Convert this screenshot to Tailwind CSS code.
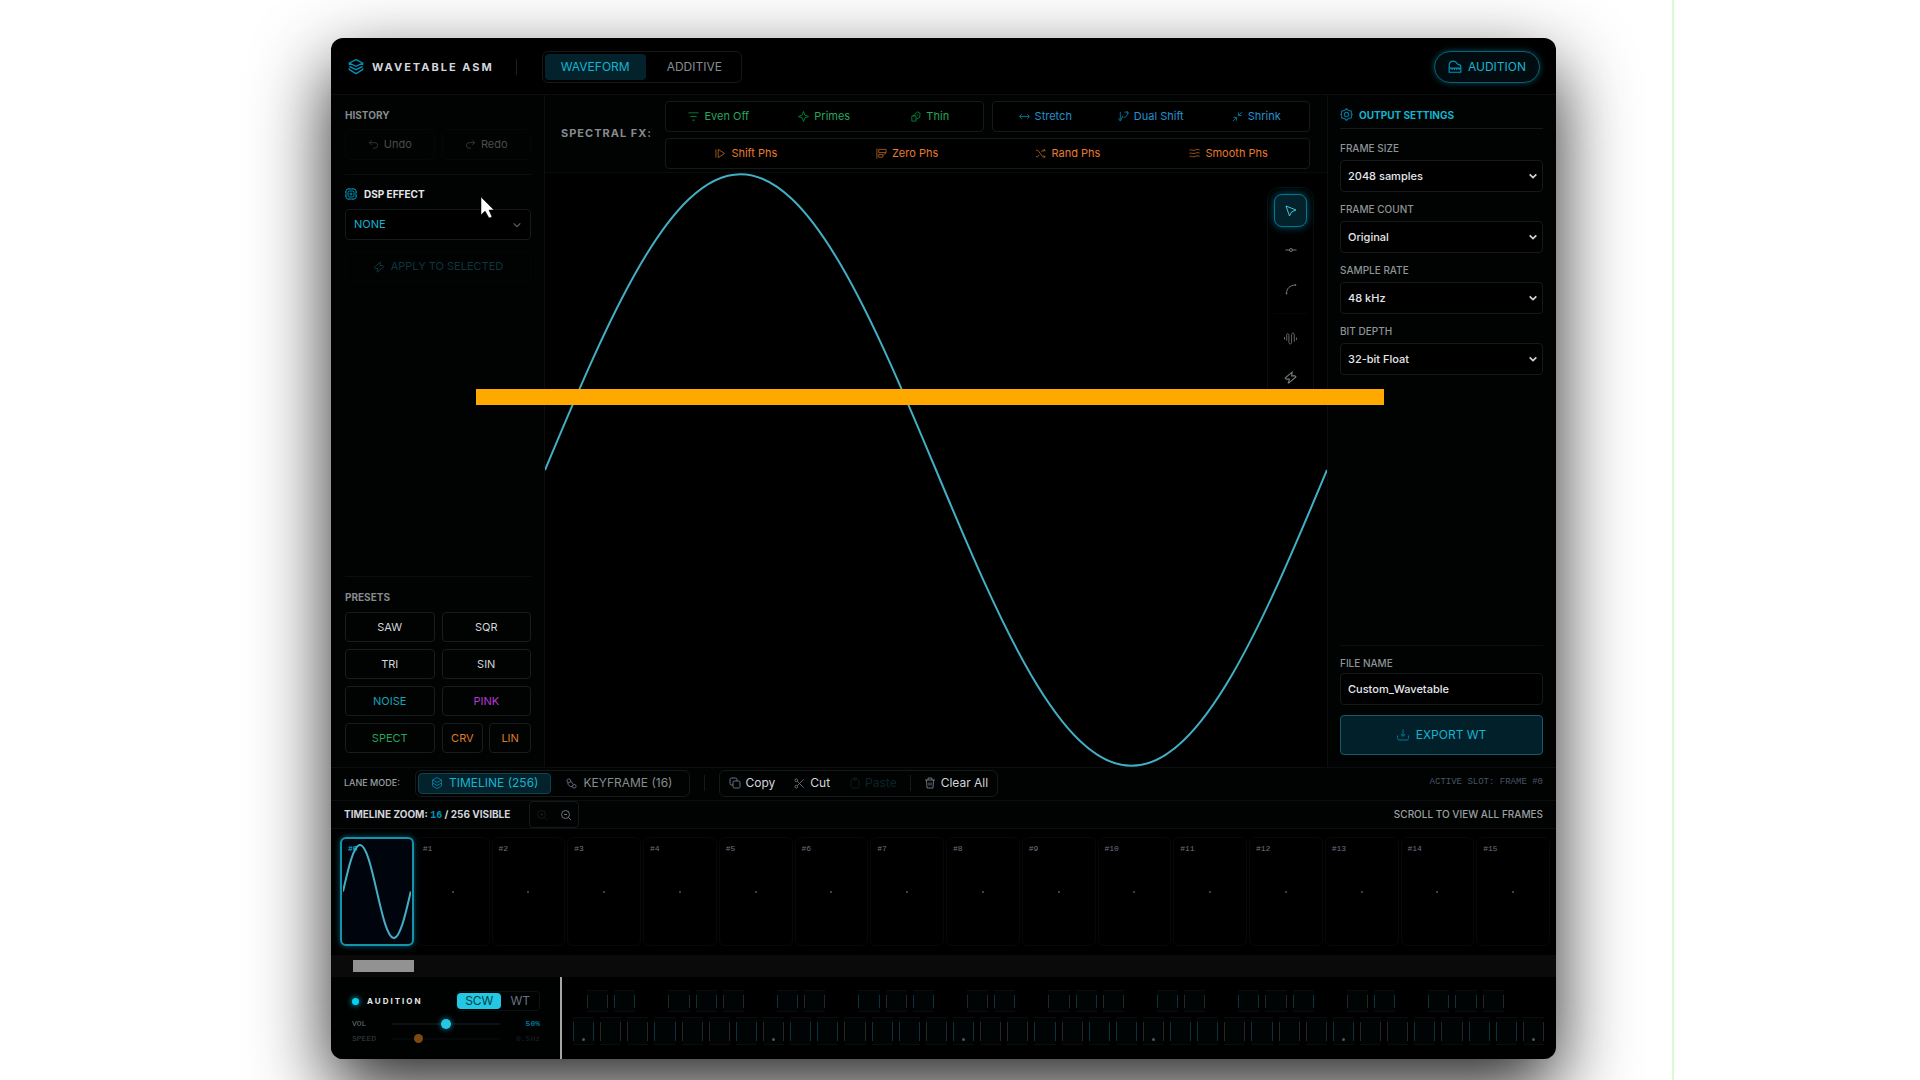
<!DOCTYPE html>
<html lang="en">

<head>
  <title>Wavetable ASM</title>
  <meta charset="UTF-8">
  <meta name="viewport" content="width=device-width, initial-scale=1.0">
  <script src="https://cdn.jsdelivr.net/npm/@tailwindcss/browser@4"></script>
</head>

<body class="bg-white font-['Inter',sans-serif] text-[11px] text-gray-300">

<!-- icon sprite -->
<svg class="hidden">
  <symbol id="i-layers" viewBox="0 0 24 24"><path d="M12 1 22 6 12 11 2 6ZM2 11l10 5 10-5M2 14v2l10 6 10-6v-2M2 7v2M22 7v2"/></symbol>
  <symbol id="i-piano" viewBox="0 0 24 24"><path d="M2 21h20V11c0-2-1-3-4-3-2 0-3-6-9-6-4 0-7 3-7 7ZM2 14h20M7 14v3M11 14v3M15 14v3M19 14v3"/></symbol>
  <symbol id="i-undo" viewBox="0 0 24 24"><path d="M8 3 3 8l5 5M3 8h12a6 6 0 0 1 0 12h-4"/></symbol>
  <symbol id="i-redo" viewBox="0 0 24 24"><path d="m16 3 5 5-5 5M21 8H9a6 6 0 0 0 0 12h4"/></symbol>
  <symbol id="i-chip" viewBox="0 0 24 24"><rect x="2" y="2" width="20" height="20" rx="4"/><rect x="6" y="6" width="12" height="12" rx="3"/><circle cx="12" cy="12" r="2"/><path d="M8 2V0M16 2V0M8 24v-2M16 24v-2M2 8H0M2 16H0M24 8h-2M24 16h-2"/></symbol>
  <symbol id="i-chevron" viewBox="0 0 24 24"><path d="m4 8 8 8 8-8"/></symbol>
  <symbol id="i-bolt" viewBox="0 0 24 24"><path d="M15 2 2 13l2 2h6l-2 7h1l13-11-2-2h-6Z"/></symbol>
  <symbol id="i-filter" viewBox="0 0 24 24"><path d="M1 4h22M5 12h14M9 20h6"/></symbol>
  <symbol id="i-primes" viewBox="0 0 24 24"><path d="m12 1 3 8 8 3-8 3-3 8-3-8-8-3 8-3Z"/></symbol>
  <symbol id="i-thin" viewBox="0 0 24 24"><path d="M4 11h9v11H4ZM10 11c0-5 3-8 7-9l5 3-1 9-8 4M15 7l2 3M7 8l1 3"/></symbol>
  <symbol id="i-stretch" viewBox="0 0 24 24"><path d="M2 12h20M6 7l-5 5 5 5M18 7l5 5-5 5"/></symbol>
  <symbol id="i-dual" viewBox="0 0 24 24"><path d="M5 2v19M1 16l4 6 6-12M14 3l3-2M12 14c6 0 9-4 9-12M16 4l5-3 2 5"/></symbol>
  <symbol id="i-shrink" viewBox="0 0 24 24"><path d="m22 2-8 8M14 3v7h7M2 22l8-8M3 14h7v7"/></symbol>
  <symbol id="i-shift" viewBox="0 0 24 24"><path d="M2 3v18M7 3v18l14-9Z"/></symbol>
  <symbol id="i-zero" viewBox="0 0 24 24"><path d="M2 1v22M6 3h16v7H6ZM6 14h9v6H6ZM16 15l6-4"/></symbol>
  <symbol id="i-shuffle" viewBox="0 0 24 24"><path d="M2 5h4l11 14h5M2 19h4l3-4M14 9l3-4h5M19 2l3 3-3 3M19 16l3 3-3 3"/></symbol>
  <symbol id="i-waves" viewBox="0 0 24 24"><path d="M1 5c4-3 6 1 10 0s7-3 12-1M1 12c4-3 6 1 10 0s7-3 12-1M1 19c4-3 6 1 10 0s7-3 12-1"/></symbol>
  <symbol id="i-pointer" viewBox="0 0 24 24"><path d="m2 2 7 20 4-8 9-4Z"/></symbol>
  <symbol id="i-node" viewBox="0 0 24 24"><circle cx="12" cy="12" r="3"/><path d="M1 12h8M15 12h8"/></symbol>
  <symbol id="i-curve" viewBox="0 0 24 24"><path d="M3 21C3 11 10 5 20 4"/><circle cx="3" cy="21" r="1"/><circle cx="21" cy="4" r="1"/></symbol>
  <symbol id="i-noise" viewBox="0 0 24 24"><path d="M1 14V9M5 16V6c0-4 4-4 4 0v13c0 4 5 4 5 0V5c0-4 5-4 5 0v13M23 15v-5"/></symbol>
  <symbol id="i-gear" viewBox="0 0 24 24"><path d="m12 1 3 3 6 2v5l2 1-2 1v5l-6 2-3 3-3-3-6-2v-5l-2-1 2-1V6l6-2Z"/><circle cx="12" cy="12" r="4"/></symbol>
  <symbol id="i-export" viewBox="0 0 24 24"><path d="M12 1v13M8 10l4 5 4-5M1 13v4c0 4 1 5 5 5h12c4 0 5-1 5-5v-4"/></symbol>
  <symbol id="i-stack" viewBox="0 0 24 24"><path d="M12 1 21 6 12 11 3 6ZM3 6v12l9 5 9-5V6M3 12l9 5 9-5"/></symbol>
  <symbol id="i-keyframe" viewBox="0 0 24 24"><circle cx="6" cy="6" r="4"/><circle cx="18" cy="18" r="4"/><path d="M4 10c0 6 4 9 10 9M10 6l6 8"/></symbol>
  <symbol id="i-copy" viewBox="0 0 24 24"><rect x="8" y="8" width="14" height="14" rx="3"/><path d="M8 16H5a3 3 0 0 1-3-3V5a3 3 0 0 1 3-3h8a3 3 0 0 1 3 3v3"/></symbol>
  <symbol id="i-cut" viewBox="0 0 24 24"><circle cx="5" cy="19" r="3"/><circle cx="5" cy="5" r="3"/><path d="m7 7 14 14M7 17 21 3"/></symbol>
  <symbol id="i-paste" viewBox="0 0 24 24"><rect x="4" y="4" width="16" height="18" rx="3"/><path d="M9 2h6v4H9Z"/></symbol>
  <symbol id="i-trash" viewBox="0 0 24 24"><path d="M2 6h20M8 6V2h8v4M5 6l1 16h12l1-16M10 11v6M14 11v6"/></symbol>
  <symbol id="i-zoom-in" viewBox="0 0 24 24"><circle cx="11" cy="11" r="8"/><path d="m17 17 5 5M8 11h6M11 8v6"/></symbol>
  <symbol id="i-zoom-out" viewBox="0 0 24 24"><circle cx="11" cy="11" r="8"/><path d="m17 17 5 5M8 11h6"/></symbol>
</svg>

<div class="relative flex h-screen flex-col overflow-hidden pt-[38px] pr-[364px] pb-[21px] pl-[331px] fill-none stroke-2">

  <div class="absolute inset-y-0 left-[1672px] w-[2px] bg-[#d9fad2]"></div>

  <div class="relative flex min-h-0 grow flex-col overflow-hidden rounded-xl bg-black shadow-[0_30px_76px_rgba(0,0,0,0.85)]">

    <header class="flex h-[57px] shrink-0 items-center border-b border-[#0b0e0e] pt-[2px] pr-4 pl-[17px]">
      <svg class="size-4 stroke-cyan-600"><use href="#i-layers"/></svg>
      <h1 class="ml-2 text-[11px] font-bold tracking-[2px] text-gray-300">WAVETABLE ASM</h1>
      <div class="ml-[22px] h-4 w-px bg-[#1c2020]"></div>
      <nav class="ml-[25px] flex h-8 gap-1 rounded-md border border-[#15191a] p-[2px] text-xs">
        <button class="rounded bg-[#04222b] px-4 text-[#14b4cf]">WAVEFORM</button>
        <button class="rounded px-[17px] text-[#868d90]">ADDITIVE</button>
      </nav>
      <button class="ml-auto flex h-8 items-center gap-[6px] rounded-full border border-[#0f5f70] bg-[#010c10] px-[13px] text-xs text-[#17b3cf] shadow-[0_0_6px_rgba(8,145,178,0.5)]">
        <svg class="size-[14px] stroke-cyan-600"><use href="#i-piano"/></svg>AUDITION
      </button>
    </header>

    <main class="flex min-h-0 grow">

      <aside class="flex w-[214px] shrink-0 flex-col border-r border-[#0b0e0e] bg-[#010202] pt-[14px] pr-[13px] pb-[14px] pl-[14px]">
        <h2 class="text-[10px] leading-3 font-bold text-[#858b8e]">HISTORY</h2>
        <div class="mt-[8px] grid grid-cols-2 gap-[7px] text-[#474d4f]">
          <button disabled class="flex h-[31px] items-center justify-center gap-[5px] rounded border border-[#050707]"><svg class="size-[11px] stroke-[#343a3c]"><use href="#i-undo"/></svg>Undo</button>
          <button disabled class="flex h-[31px] items-center justify-center gap-[5px] rounded border border-[#050707]"><svg class="size-[11px] stroke-[#343a3c]"><use href="#i-redo"/></svg>Redo</button>
        </div>
        <label for="dsp" class="mt-[14px] flex items-center gap-[7px] border-t border-[#0b0e0e] pt-[13px] text-[10px] leading-3 font-bold text-gray-200">
          <svg class="size-3 stroke-cyan-600"><use href="#i-chip"/></svg>DSP EFFECT
        </label>
        <div class="mt-[9px] grid items-center">
          <select id="dsp" class="col-start-1 row-start-1 h-[31px] appearance-none rounded border border-[#15191a] bg-black px-2 text-[11px] text-[#14b4cf]"><option>NONE</option></select>
          <svg class="col-start-1 row-start-1 mr-[9px] size-[10px] justify-self-end stroke-3 stroke-[#596064]"><use href="#i-chevron"/></svg>
        </div>
        <button disabled class="mt-[11px] flex h-[31px] items-center justify-center gap-[6px] rounded border border-[#040606] text-[#0c353f]"><svg class="size-3 stroke-[#0c353f]"><use href="#i-bolt"/></svg>APPLY TO SELECTED</button>

        <section class="mt-auto border-t border-[#0b0e0e] pt-[14px]">
          <h2 class="text-[10px] leading-3 font-bold text-[#858b8e]">PRESETS</h2>
          <div class="mt-[9px] grid grid-cols-2 gap-[7px]">
            <button class="h-[30px] rounded border border-[#181c1d]">SAW</button>
            <button class="h-[30px] rounded border border-[#181c1d]">SQR</button>
            <button class="h-[30px] rounded border border-[#181c1d]">TRI</button>
            <button class="h-[30px] rounded border border-[#181c1d]">SIN</button>
            <button class="h-[30px] rounded border border-[#181c1d] text-[#14a5b8]">NOISE</button>
            <button class="h-[30px] rounded border border-[#181c1d] text-[#b836cf]">PINK</button>
            <button class="h-[30px] rounded border border-[#181c1d] text-[#25a55c]">SPECT</button>
            <div class="grid grid-cols-2 gap-[6px] text-[#df7d2a]">
              <button class="h-[30px] rounded border border-[#181c1d]">CRV</button>
              <button class="h-[30px] rounded border border-[#181c1d]">LIN</button>
            </div>
          </div>
        </section>
      </aside>

      <section class="flex min-w-0 grow flex-col">
        <div class="flex h-[78px] shrink-0 items-center border-b border-[#080b0b] bg-[#010202] pr-[17px] pl-[16px]">
          <h2 class="w-[104px] shrink-0 text-[11px] font-bold tracking-[1px] text-[#858b8e]">SPECTRAL FX:</h2>
          <div class="grid grow grid-cols-2 gap-x-2 gap-y-[6px] pt-[2px]">
            <div class="grid h-[31px] grid-cols-3 rounded border border-[#15191a] bg-black text-[#25a55c]">
              <button class="flex items-center justify-center gap-[5px]"><svg class="size-[11px] stroke-green-700"><use href="#i-filter"/></svg>Even Off</button>
              <button class="flex items-center justify-center gap-[5px]"><svg class="size-[11px] stroke-green-700"><use href="#i-primes"/></svg>Primes</button>
              <button class="flex items-center justify-center gap-[5px]"><svg class="size-[11px] stroke-green-700"><use href="#i-thin"/></svg>Thin</button>
            </div>
            <div class="grid h-[31px] grid-cols-3 rounded border border-[#15191a] bg-black text-[#2391cd]">
              <button class="flex items-center justify-center gap-[5px]"><svg class="size-[11px] stroke-cyan-700"><use href="#i-stretch"/></svg>Stretch</button>
              <button class="flex items-center justify-center gap-[5px]"><svg class="size-[11px] stroke-cyan-700"><use href="#i-dual"/></svg>Dual Shift</button>
              <button class="flex items-center justify-center gap-[5px]"><svg class="size-[11px] stroke-cyan-700"><use href="#i-shrink"/></svg>Shrink</button>
            </div>
            <div class="col-span-2 grid h-[31px] grid-cols-4 rounded border border-[#15191a] bg-black text-[#e87a2e]">
              <button class="flex items-center justify-center gap-[5px]"><svg class="size-[11px] stroke-[#a35a1c]"><use href="#i-shift"/></svg>Shift Phs</button>
              <button class="flex items-center justify-center gap-[5px]"><svg class="size-[11px] stroke-[#a35a1c]"><use href="#i-zero"/></svg>Zero Phs</button>
              <button class="flex items-center justify-center gap-[5px]"><svg class="size-[11px] stroke-[#a35a1c]"><use href="#i-shuffle"/></svg>Rand Phs</button>
              <button class="flex items-center justify-center gap-[5px]"><svg class="size-[11px] stroke-[#a35a1c]"><use href="#i-waves"/></svg>Smooth Phs</button>
            </div>
          </div>
        </div>
        <div class="relative min-h-0 grow bg-black">
          <svg class="absolute inset-0 size-full stroke-[#42afc4]" viewBox="0 0 1000 200" preserveAspectRatio="none">
            <path vector-effect="non-scaling-stroke" d="M0 100C81.5 48.8 159.5 0.4 250 0.4C340.5 0.4 418.5 48.8 500 100C581.5 151.2 659.5 199.6 750 199.6C840.5 199.6 918.5 151.2 1000 100"/>
          </svg>
          <div class="absolute top-[14px] right-[13px] flex flex-col gap-[6px] rounded-xl border border-[#0b0e0e] p-[6px]">
            <button aria-label="Select" class="grid size-[33px] place-items-center rounded-lg border border-cyan-700 bg-[#04222b] shadow-[0_0_8px_rgba(8,145,178,0.6)]"><svg class="size-3 stroke-[#3fc4d8]"><use href="#i-pointer"/></svg></button>
            <button aria-label="Line" class="grid size-[33px] place-items-center"><svg class="size-3 stroke-[#767c7f]"><use href="#i-node"/></svg></button>
            <button aria-label="Curve" class="grid size-[33px] place-items-center"><svg class="size-3 stroke-[#767c7f]"><use href="#i-curve"/></svg></button>
            <div class="my-[2px] h-px bg-[#050707]"></div>
            <button aria-label="Noise" class="grid size-[33px] place-items-center"><svg class="size-[13px] stroke-[1.5] stroke-[#767c7f]"><use href="#i-noise"/></svg></button>
            <button aria-label="Bolt" class="grid size-[33px] place-items-center"><svg class="size-[13px] stroke-[#767c7f]"><use href="#i-bolt"/></svg></button>
          </div>
        </div>
      </section>

      <aside class="flex w-[229px] shrink-0 flex-col border-l border-[#0b0e0e] bg-[#010202] pt-[13px] pr-[13px] pb-[12px] pl-[12px]">
        <h2 class="flex items-center gap-[6px] border-b border-[#15191a] pb-[7px] text-[10px] leading-3 font-bold text-[#14b4cf]">
          <svg class="size-[13px] stroke-cyan-700"><use href="#i-gear"/></svg>OUTPUT SETTINGS
        </h2>
        <div id="settings" class="mt-[13px] flex flex-col gap-[11px]"></div>
        <div class="mt-auto flex flex-col border-t border-[#0b0e0e] pt-[11px]">
          <label for="file" class="text-[10px] leading-3 font-medium text-[#8e9497]">FILE NAME</label>
          <input id="file" value="Custom_Wavetable" class="mt-[4px] h-8 rounded border border-[#15191a] bg-black px-[7px] text-[11px] font-medium text-gray-200">
          <button class="mt-[10px] flex h-10 items-center justify-center gap-[7px] rounded border border-[#1b5966] bg-[#02202a] text-xs text-[#14b4cf]"><svg class="size-3 stroke-cyan-700"><use href="#i-export"/></svg>EXPORT WT</button>
        </div>
      </aside>
    </main>

    <div class="flex h-[33px] shrink-0 items-center border-t border-[#0b0e0e] bg-[#010202] px-[13px] pb-[2px]">
      <span class="w-[71px] shrink-0 text-[9px] font-medium text-[#9aa0a3]">LANE MODE:</span>
      <div class="flex h-[27px] rounded-md border border-[#15191a] p-[2px] text-xs">
        <button class="flex items-center gap-[6px] rounded border border-[#0a4450] bg-[#04222b] px-[12px] text-[#14b4cf]"><svg class="size-3 stroke-cyan-700"><use href="#i-stack"/></svg>TIMELINE (256)</button>
        <button class="flex items-center gap-[6px] px-[15px] text-[#868d90]"><svg class="size-[11px] stroke-gray-500"><use href="#i-keyframe"/></svg>KEYFRAME (16)</button>
      </div>
      <div class="mx-[14px] h-4 w-px bg-[#15191a]"></div>
      <div class="flex h-[27px] items-center rounded-md border border-[#15191a] px-[9px] text-xs text-gray-300">
        <button class="flex items-center gap-1"><svg class="size-3 stroke-gray-500"><use href="#i-copy"/></svg>Copy</button>
        <button class="ml-[19px] flex items-center gap-[5px]"><svg class="size-[11px] stroke-gray-500"><use href="#i-cut"/></svg>Cut</button>
        <button disabled class="ml-[19px] flex items-center gap-1 text-[#0d2227]"><svg class="size-3 stroke-[#0d1a1d]"><use href="#i-paste"/></svg>Paste</button>
        <div class="mx-[13px] h-4 w-px bg-[#15191a]"></div>
        <button class="flex items-center gap-[5px]"><svg class="size-3 stroke-gray-500"><use href="#i-trash"/></svg>Clear All</button>
      </div>
      <span class="ml-auto font-['Liberation_Mono',monospace] text-[9px] text-gray-600">ACTIVE SLOT: FRAME #0</span>
    </div>

    <div class="flex h-[29px] shrink-0 items-center border-y border-[#0b0e0e] bg-[#010202] px-[13px]">
      <span class="w-[185px] shrink-0 text-[10px] font-bold text-gray-300">TIMELINE ZOOM: <span class="font-['Liberation_Mono',monospace] text-cyan-600">16</span> / 256 VISIBLE</span>
      <div class="flex h-[27px] items-center rounded border border-[#15191a]">
        <button aria-label="Zoom in" disabled class="grid w-6 place-items-center"><svg class="size-3 stroke-[#16191a]"><use href="#i-zoom-in"/></svg></button>
        <button aria-label="Zoom out" class="grid w-6 place-items-center"><svg class="size-3 stroke-gray-500"><use href="#i-zoom-out"/></svg></button>
      </div>
      <span class="ml-auto text-[10px] font-medium text-[#9aa0a3]">SCROLL TO VIEW ALL FRAMES</span>
    </div>

    <div id="frames" class="grid h-[126px] shrink-0 grid-cols-16 gap-[2px] pt-[8px] pr-[6px] pb-[9px] pl-[9px]"></div>

    <div class="flex h-[22px] shrink-0 items-center bg-[#0a0a0a] pl-[22px]">
      <div class="h-3 w-[61px] bg-[#929292]"></div>
    </div>

    <footer class="flex h-[82px] shrink-0">
      <div class="flex w-[231px] shrink-0 flex-col border-r-2 border-[#a6a6a6] bg-[#000101] pt-[14px] pr-[20px] pl-[21px] font-['Liberation_Mono',monospace]">
        <div class="flex h-5 items-center font-['Inter',sans-serif]">
          <span class="size-[7px] rounded-full bg-cyan-400 shadow-[0_0_6px_#22d3ee]"></span>
          <h2 class="ml-[8px] text-[8px] font-bold tracking-[2px] text-gray-200">AUDITION</h2>
          <div class="ml-auto flex h-5 items-center rounded border border-[#0e1112] text-xs">
            <button class="h-4 rounded bg-[#25c8e2] px-2 leading-4 text-[#03404a]">SCW</button>
            <button class="px-[9px] text-gray-500">WT</button>
          </div>
        </div>
        <label class="mt-[5px] flex h-[15px] items-center text-[8px] text-[#6b7376]">
          <span class="w-10">VOL</span>
          <input type="range" value="50" class="h-[2px] w-[108px] appearance-none rounded bg-[#0c1213] [&::-webkit-slider-thumb]:size-[10px] [&::-webkit-slider-thumb]:appearance-none [&::-webkit-slider-thumb]:rounded-full [&::-webkit-slider-thumb]:bg-[#25c8e2] [&::-webkit-slider-thumb]:shadow-[0_0_6px_#0891b2]">
          <span class="ml-auto font-bold text-cyan-700">50%</span>
        </label>
        <label class="flex h-[15px] items-center text-[8px] text-[#3a3f41]">
          <span class="w-10">SPEED</span>
          <input type="range" value="22" class="h-[2px] w-[108px] appearance-none rounded bg-[#050808] [&::-webkit-slider-thumb]:size-[9px] [&::-webkit-slider-thumb]:appearance-none [&::-webkit-slider-thumb]:rounded-full [&::-webkit-slider-thumb]:bg-[#7a4a10]">
          <span class="ml-auto text-[#1c2122]">0.5Hz</span>
        </label>
      </div>
      <div class="flex grow flex-col gap-[5px] pt-[13px] pr-[12px] pl-[11px]">
        <div id="blackKeys" class="grid h-[22px] translate-x-[14px] grid-cols-36 gap-x-[6px]"></div>
        <div id="whiteKeys" class="grid h-[28px] grid-cols-36 gap-x-[6px]"></div>
      </div>
    </footer>
  </div>

  <div class="absolute top-[389px] right-[536px] left-[476px] h-4 bg-[#ffa800]"></div>
  <svg class="absolute top-[196px] left-[480px] h-[23px] w-[15px] fill-white stroke-black stroke-[0.5]" viewBox="0 0 15 23"><path d="M1 1v18l4-4 4 7 3-1-3-7h5Z"/></svg>
</div>

<script>
  const settings = [
    ['FRAME SIZE', '2048 samples'],
    ['FRAME COUNT', 'Original'],
    ['SAMPLE RATE', '48 kHz'],
    ['BIT DEPTH', '32-bit Float'],
  ];

  document.getElementById('settings').innerHTML = settings.map(([label, value], i) => `
    <div class="grid items-center">
      <label for="setting${i}" class="mb-[6px] text-[10px] leading-3 font-medium text-[#8e9497]">${label}</label>
      <div class="grid items-center">
        <select id="setting${i}" class="col-start-1 row-start-1 h-8 appearance-none rounded border border-[#15191a] bg-black px-[7px] text-[11px] font-medium text-gray-200"><option>${value}</option></select>
        <svg class="col-start-1 row-start-1 mr-[5px] size-[10px] justify-self-end stroke-4 stroke-gray-300"><use href="#i-chevron"/></svg>
      </div>
    </div>
  `).join('');

  const wave = `<svg class="col-start-1 row-start-1 size-full stroke-[#42afc4] px-px py-[5px]" viewBox="0 0 1000 200" preserveAspectRatio="none">
    <path vector-effect="non-scaling-stroke" d="M0 100C81.5 48.8 159.5 2 250 2C340.5 2 418.5 48.8 500 100C581.5 151.2 659.5 198 750 198C840.5 198 918.5 151.2 1000 100"/></svg>`;

  document.getElementById('frames').innerHTML = Array.from({ length: 16 }, (_, i) => i === 0
    ? `<button class="grid min-w-0 rounded-md border-2 border-[#1593ab] bg-[#00040c] shadow-[0_0_6px_rgba(8,145,178,0.6)]">
        <span class="col-start-1 row-start-1 self-start pt-[4px] pl-[6px] text-left font-['Liberation_Mono',monospace] text-[8px] font-bold text-cyan-500">#0</span>${wave}
      </button>`
    : `<button class="grid min-w-0 rounded-md border border-[#070909]">
        <span class="col-start-1 row-start-1 self-start pt-[5px] pl-[6px] text-left font-['Liberation_Mono',monospace] text-[8px] text-gray-500">#${i}</span>
        <span class="col-start-1 row-start-1 size-[2px] place-self-center bg-gray-700"></span>
      </button>`).join('');

  // c = cyan edges, g = gray edges, - = no key
  const keyColors = { c: 'border-[#06343d]', g: 'border-[#242728]' };

  function key(kind, dot) {
    if (kind === '-') return '<span></span>';
    return `<button class="flex flex-col border-y border-[#0a0c0d] bg-[#010405] pt-[4px] pb-[3px]">
      <span class="flex w-full grow items-end justify-center border-x ${keyColors[kind]}">${dot ? '<span class="size-[3px] rounded-full bg-gray-600"></span>' : ''}</span>
    </button>`;
  }

  document.getElementById('whiteKeys').innerHTML =
    [...'cggcggcgccgccgcggcgccgccgcggcggcgccg'].map((kind, i) => key(kind, i % 7 === 0)).join('');

  // black keys sit half a key to the right of the white ones
  document.getElementById('blackKeys').innerHTML =
    [...'gc-gcg-cg-cgc-gc-gcg-cg-cgc-gc-ccg--'].map((kind) => key(kind)).join('');
</script>
</body>

</html>
